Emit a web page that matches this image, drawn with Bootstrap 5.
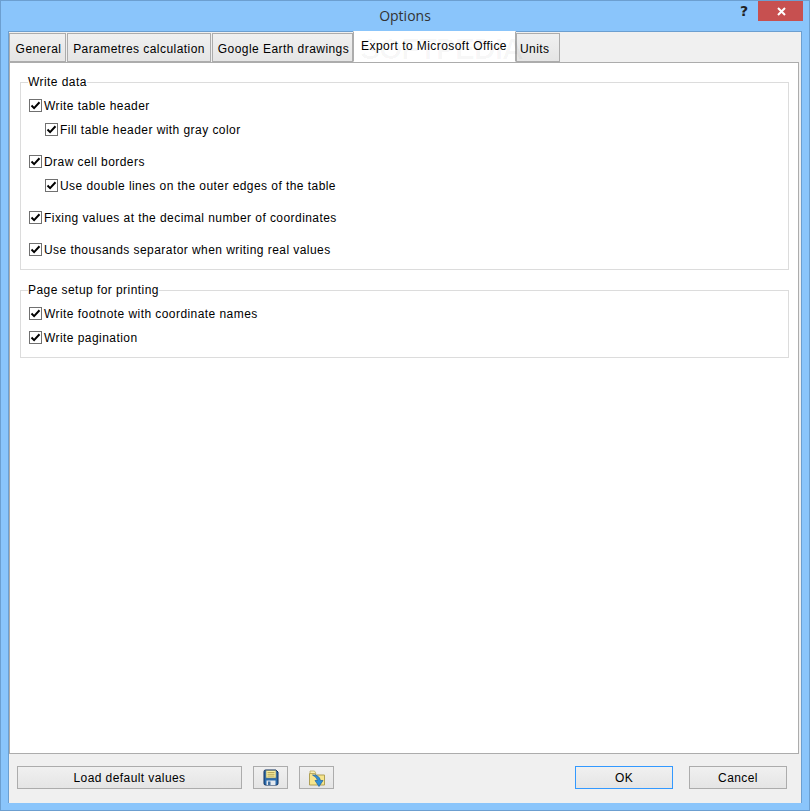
<!DOCTYPE html>
<html lang="en">
<head>
<meta charset="utf-8">
<title>Options</title>
<link href="https://cdn.jsdelivr.net/npm/bootstrap@5.3.0/dist/css/bootstrap.min.css" rel="stylesheet">
<style>
html,body{margin:0;height:811px;overflow:hidden;background:#8ac5fb}
body{font-family:"Liberation Sans",Arial,sans-serif;font-size:12px;color:#000;letter-spacing:.44px}
.win{width:810px;height:811px;background:#8ac5fb;border:1px solid #6c9fd0;display:flex;flex-direction:column}
.titlebar{height:30px;flex:none;position:relative;display:flex;justify-content:center;align-items:center}
.wintitle{font-family:"Open Sans",sans-serif;font-size:14px;letter-spacing:0;color:#333;padding-bottom:2px}
.helpq{position:absolute;left:739px;top:2px;font:bold 14px "DejaVu Sans",sans-serif;color:#222;letter-spacing:0}
.closex{position:absolute;left:757px;top:0;width:45px;height:20px;background:#c75050;display:flex;align-items:center;justify-content:center;padding-left:1px}
.client{margin:0 7px;height:772px;width:794px;background:#f0f0f0;border-top:1px solid #6c9fd0;border-left:1px solid #6c9fd0;border-right:1px solid #6c9fd0;display:flex;flex-direction:column;position:relative;flex:none}
.tabstrip{height:30px;flex:none;padding:1px 0 0 0;border:0;flex-wrap:nowrap;align-items:flex-start;gap:0;position:relative;z-index:2;margin:0}
.tabstrip .nav-link{height:29px;border:1px solid #acacac;border-radius:0;margin:0;padding:2px 0 0;color:#000;background:linear-gradient(#f0f0f0,#e5e5e5);display:flex;align-items:center;justify-content:center;font-size:12px;margin-right:1px}
.tabstrip .nav-link.active{height:31px;margin-top:-2px;margin-left:-1px;margin-right:0;background:#fff;border-color:#fff #acacac #fff #acacac;color:#000;padding:0 1px 1px 0;position:relative}
.nudge1{padding-left:2px!important}
.unitstab{justify-content:flex-start!important;padding-left:3px!important}
.wmark{position:absolute;left:6px;top:0;font:bold 30px "Liberation Sans",sans-serif;letter-spacing:-1px;color:rgba(0,0,0,.03);pointer-events:none;white-space:nowrap}
.tablabel{position:relative}
.panel{height:692px;flex:none;background:#fff;border:1px solid #acacac;margin:0 2px 0 0;padding:12px 9px 0 10px}
.grp{border:1px solid #dcdcdc;margin:0 0 13px 0;padding:0 0 0 8px;min-width:0}
.grp legend{float:none;width:auto;font-size:12px;line-height:15px;margin:0;padding:0;margin-left:-1px}
.rowchk{height:24px;display:flex;align-items:center;margin:0;padding:0;min-height:0}
.rowchk.ind{padding-left:16px}
.rowchk .form-check-input{float:none;flex:none;margin:0 2px 0 0;width:13px;height:13px;border:1px solid #707070;border-radius:0;background-color:#fff;background-size:11px 11px;background-position:center;background-image:url("data:image/svg+xml,%3csvg xmlns='http://www.w3.org/2000/svg' viewBox='0 0 11 11'%3e%3cpath fill='none' stroke='%23000' stroke-width='2' d='M1.500 5.500l2.600 2.600L9.500 2.300'/%3e%3c/svg%3e");box-shadow:none}
.rowchk .form-check-label{line-height:15px;white-space:nowrap;padding-top:2px}
.gap8{margin-bottom:8px}
.grpfirst{height:195px;padding-top:3px}
.grpsecond{height:75px;padding-top:3px}
.foot{height:49px;flex:none;display:flex;align-items:flex-start;padding:12px 0 0 8px}
.winbtn{height:23px;border:1px solid #acacac;border-radius:0;padding:0;font-size:12px;letter-spacing:.42px;color:#000;background:linear-gradient(#f0f0f0,#e5e5e5);display:flex;align-items:center;justify-content:center;line-height:1}
.w-load{width:225px;margin-right:11px}
.w-ico{width:35px;margin-right:11px}
.w-act{width:98px}
.okbtn{border-color:#3399ff;margin-left:230px;margin-right:16px}
</style>
</head>
<body>
<div class="win">
  <div class="titlebar">
    <span class="wintitle">Options</span>
    <span class="helpq">?</span>
    <span class="closex"><svg width="11" height="11" viewBox="0 0 11 11"><path d="M2 2l7 7M9 2l-7 7" stroke="#fff" stroke-width="2" fill="none"/></svg></span>
  </div>
  <div class="client">
    <ul class="nav nav-tabs tabstrip">
      <li class="nav-item"><a class="nav-link nudge1" style="width:57px">General</a></li>
      <li class="nav-item"><a class="nav-link" style="width:144px">Parametres calculation</a></li>
      <li class="nav-item"><a class="nav-link nudge1" style="width:141px">Google Earth drawings</a></li>
      <li class="nav-item"><a class="nav-link active" style="width:163px"><span class="wmark">SOFTPEDIA</span><span class="tablabel">Export to Microsoft Office</span></a></li>
      <li class="nav-item"><a class="nav-link unitstab" style="width:44px">Units</a></li>
    </ul>
    <div class="panel">
      <fieldset class="grp grpfirst">
        <legend>Write data</legend>
        <div class="form-check rowchk"><input class="form-check-input" type="checkbox" checked id="c1"><label class="form-check-label" for="c1">Write table header</label></div>
        <div class="form-check rowchk ind gap8"><input class="form-check-input" type="checkbox" checked id="c2"><label class="form-check-label" for="c2">Fill table header with gray color</label></div>
        <div class="form-check rowchk"><input class="form-check-input" type="checkbox" checked id="c3"><label class="form-check-label" for="c3">Draw cell borders</label></div>
        <div class="form-check rowchk ind gap8"><input class="form-check-input" type="checkbox" checked id="c4"><label class="form-check-label" for="c4">Use double lines on the outer edges of the table</label></div>
        <div class="form-check rowchk gap8"><input class="form-check-input" type="checkbox" checked id="c5"><label class="form-check-label" for="c5">Fixing values at the decimal number of coordinates</label></div>
        <div class="form-check rowchk"><input class="form-check-input" type="checkbox" checked id="c6"><label class="form-check-label" for="c6">Use thousands separator when writing real values</label></div>
      </fieldset>
      <fieldset class="grp grpsecond">
        <legend>Page setup for printing</legend>
        <div class="form-check rowchk"><input class="form-check-input" type="checkbox" checked id="c7"><label class="form-check-label" for="c7">Write footnote with coordinate names</label></div>
        <div class="form-check rowchk"><input class="form-check-input" type="checkbox" checked id="c8"><label class="form-check-label" for="c8">Write pagination</label></div>
      </fieldset>
    </div>
    <div class="foot">
      <button type="button" class="btn winbtn w-load">Load default values</button>
      <button type="button" class="btn winbtn w-ico" aria-label="Save"><svg width="16" height="17" viewBox="0 0 16 17"><path d="M1 2.500Q1 1 2.500 1h10.500L15 3v11.500q0 1.500-1.500 1.500h-11Q1 16 1 14.500z" fill="#2a6cae" stroke="#0f2f5c"/><rect x="3" y="1.500" width="10" height="7.500" fill="#f8efa0" stroke="#6d7a70" stroke-width=".6"/><path d="M4.500 3.500h7M4.500 5.300h7M4.500 7.100h7" stroke="#b9a95c"/><path d="M3.500 11.500h9v4.500h-9z" fill="#e4e9ef"/><rect x="5" y="12.500" width="2.500" height="3.500" fill="#3f6f9f"/></svg></button>
      <button type="button" class="btn winbtn w-ico" aria-label="Open"><svg width="18" height="18" viewBox="0 0 18 18"><path d="M1.500 4.500h5l1.500 1.500h8.500v10H1.500z" fill="#f6e58c" stroke="#b0a055"/><path d="M2 2h4.500l1.500 2.500H2z" fill="#faf0b4" stroke="#b0a055" stroke-width=".7"/><path d="M4.500 6q6.500-.500 8 5.500H15L11 17.500 7 11.500h2.500Q9 8 4.500 6z" fill="#2f8fd8" stroke="#1d5f9f" stroke-width=".7"/></svg></button>
      <button type="button" class="btn winbtn w-act okbtn">OK</button>
      <button type="button" class="btn winbtn w-act">Cancel</button>
    </div>
  </div>
</div>
<script src="https://cdn.jsdelivr.net/npm/bootstrap@5.3.0/dist/js/bootstrap.bundle.min.js"></script>
</body>
</html>
